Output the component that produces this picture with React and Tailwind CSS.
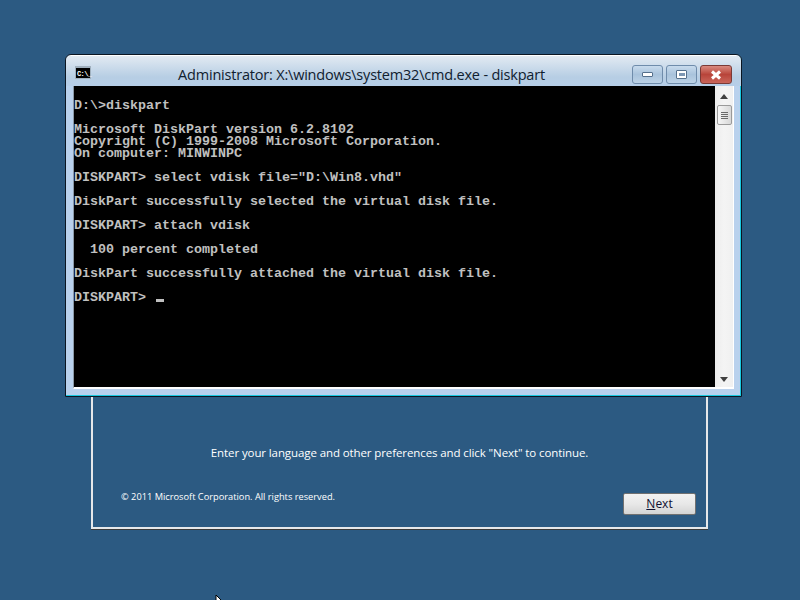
const consoleLines = [
  '',
  'D:\\>diskpart',
  '',
  'Microsoft DiskPart version 6.2.8102',
  'Copyright (C) 1999-2008 Microsoft Corporation.',
  'On computer: MINWINPC',
  '',
  'DISKPART> select vdisk file="D:\\Win8.vhd"',
  '',
  'DiskPart successfully selected the virtual disk file.',
  '',
  'DISKPART> attach vdisk',
  '',
  '  100 percent completed',
  '',
  'DiskPart successfully attached the virtual disk file.',
  '',
]

function CaptionButton({ className, children }) {
  return (
    <div className={`flex h-[19px] items-center justify-center rounded-[3px] border ${className}`}>
      {children}
    </div>
  )
}

function Scrollbar() {
  return (
    <div className="flex w-[18px] flex-col items-center bg-gradient-to-r from-[#ececec] via-[#f4f4f4] to-[#f0f0f0]">
      <svg width="8" height="5" viewBox="0 0 8 5" className="mt-[8px]">
        <path d="M4 0 L8 5 H0 Z" fill="#404040" />
      </svg>
      <div className="mt-[6px] flex h-[20px] w-[15px] flex-col items-center justify-center gap-[1px] rounded-[2px] border border-[#9a9a9a] bg-gradient-to-r from-[#f6f6f6] to-[#d8d8d8]">
        <div className="h-px w-[7px] bg-[#6a6a6a]" />
        <div className="h-px w-[7px] bg-[#6a6a6a]" />
        <div className="h-px w-[7px] bg-[#6a6a6a]" />
        <div className="h-px w-[7px] bg-[#6a6a6a]" />
      </div>
      <svg width="8" height="5" viewBox="0 0 8 5" className="mt-auto mb-[5px]">
        <path d="M0 0 H8 L4 5 Z" fill="#404040" />
      </svg>
    </div>
  )
}

function CmdWindow() {
  return (
    <div className="absolute left-[65px] top-[54px] flex h-[343px] w-[677px] flex-col rounded-t-[6px] border border-[#0b1622] bg-[#b9d1ed] shadow-[inset_0_1px_0_#ffffff,inset_-1px_-1px_0_#19c8e0]">
      <div className="mt-px flex h-[30px] shrink-0 items-center rounded-t-[5px] bg-gradient-to-b from-[#e2eaf2] via-[#b7cee4] via-70% to-[#b6cee8] pr-[9px] pl-[9px]">
        <div className="mt-[2px] flex h-[13px] w-[16px] items-end border border-t-[2px] border-[#a0b0be] bg-black pl-px font-['Liberation_Mono',monospace] text-[7px] leading-[8px] font-bold tracking-[-0.6px] text-white">
          C:\_
        </div>
        <div className="mt-[7px] flex-1 text-center font-['Open_Sans',sans-serif] text-[14.5px] leading-[18px] tracking-[-0.2px] text-[#10202f]">
          Administrator: X:\windows\system32\cmd.exe - diskpart
        </div>
        <div className="mt-[7px] flex items-center gap-[3px]">
          <CaptionButton className="w-[31px] border-[#6f8cab] bg-gradient-to-b from-[#c8dbed] via-[#a9c3dc] to-[#bcd2e6]">
            <div className="h-[5px] w-[11px] rounded-[1px] border border-[#55708c] bg-white" />
          </CaptionButton>
          <CaptionButton className="w-[31px] border-[#6f8cab] bg-gradient-to-b from-[#c8dbed] via-[#a9c3dc] to-[#bcd2e6]">
            <div className="flex h-[9px] w-[11px] items-center justify-center rounded-[1px] border border-[#55708c] bg-white">
              <div className="h-[3px] w-[6px] bg-[#7d97b3]" />
            </div>
          </CaptionButton>
          <CaptionButton className="w-[32px] border-[#7a3a36] bg-gradient-to-b from-[#d98a80] via-[#b8443a] to-[#c9655a]">
            <svg width="12" height="10" viewBox="0 0 12 10">
              <path d="M2 1.5 L10 8.5 M10 1.5 L2 8.5" stroke="#ffffff" strokeWidth="3" />
            </svg>
          </CaptionButton>
        </div>
      </div>
      <div className="mx-[7px] flex h-[303px] border-r border-b-[2px] border-l border-r-white border-b-white border-l-[#8a98a6]">
        <div className="w-[641px] bg-black pt-[2px] font-['Liberation_Mono',monospace] text-[13.33px] leading-[12px] font-bold text-[#c0c0c0]">
          {consoleLines.map((line, index) => (
            <div key={index} className="h-[12px] whitespace-pre">{line}</div>
          ))}
          <div className="flex h-[12px] whitespace-pre">
            DISKPART&gt; <span className="mt-[7px] ml-[2px] h-[3px] w-[8px] bg-[#c0c0c0]" />
          </div>
        </div>
        <Scrollbar />
      </div>
    </div>
  )
}

function SetupWindow() {
  return (
    <div className="absolute left-[91px] top-[200px] flex h-[329px] w-[617px] flex-col border-[2px] border-[#e6e8ea] font-['Open_Sans',sans-serif] text-white shadow-[0_1px_0_#3a3a3a]">
      <div className="mt-[243px] text-center text-[11.5px] leading-[16px] tracking-[-0.1px]">
        Enter your language and other preferences and click "Next" to continue.
      </div>
      <div className="mt-[20px] flex items-start justify-between pr-[10px] pl-[28px]">
        <div className="mt-[10px] text-[9.25px] leading-[12px]">© 2011 Microsoft Corporation. All rights reserved.</div>
        <div className="mt-[12px] flex h-[22px] w-[73px] items-center justify-center rounded-[2px] border border-[#707070] bg-gradient-to-b from-[#f2f2f2] via-[#e8e8e8] to-[#d4d4d4] text-[12px] text-[#101030]">
          <span><span className="underline">N</span>ext</span>
        </div>
      </div>
    </div>
  )
}

export default function App() {
  return (
    <div className="relative h-[600px] w-[800px] overflow-hidden bg-[#2c5a82]">
      <SetupWindow />
      <CmdWindow />
      <svg width="8" height="6" viewBox="0 0 8 6" className="absolute left-[215px] top-[595px]">
        <path d="M1 0 V6 H7 Z" fill="#ffffff" stroke="#000000" strokeWidth="1" />
      </svg>
    </div>
  )
}
